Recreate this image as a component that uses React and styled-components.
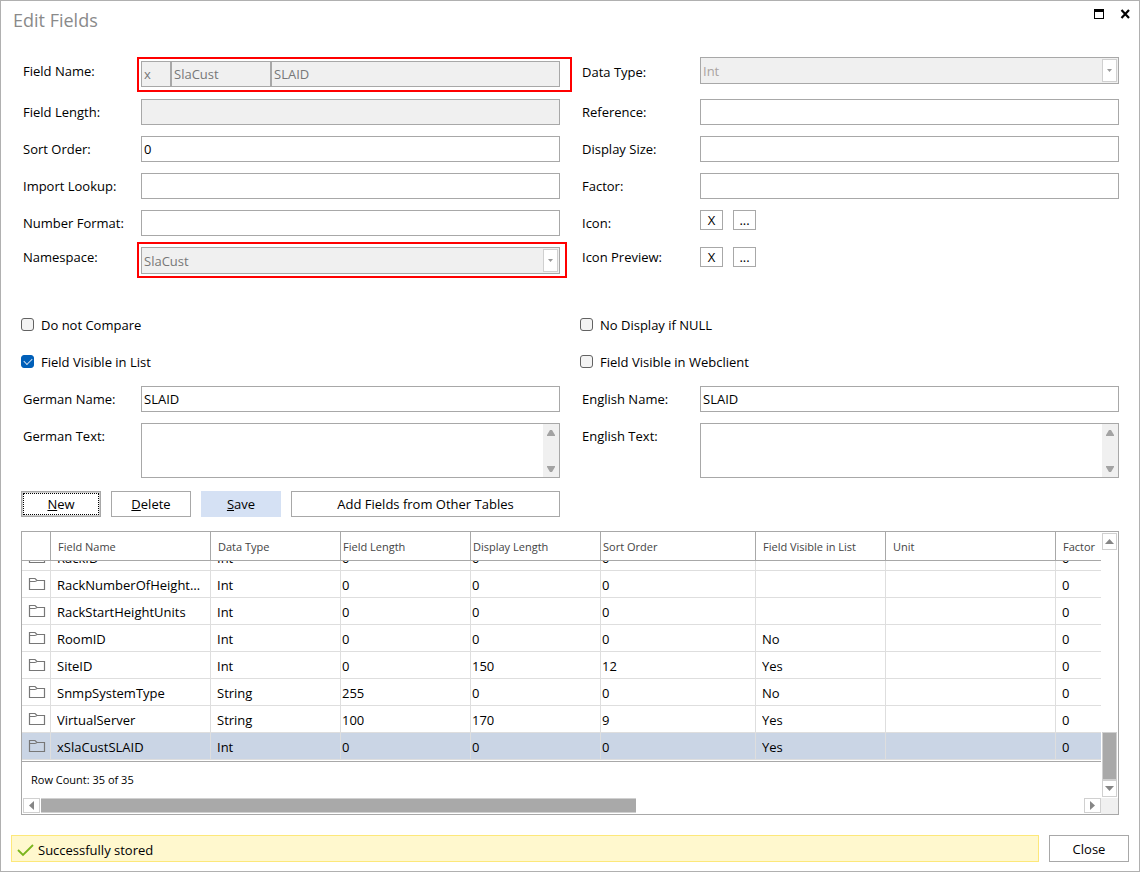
import React, { useState } from "react";
import styled, { createGlobalStyle, css } from "styled-components";

const line = "#a8a8a8";
const softLine = "#dedede";

const GlobalStyle = createGlobalStyle`
  * {
    box-sizing: border-box;
  }

  body {
    margin: 0;
    background: #fff;
  }

  body, button, input, select, textarea {
    font-family: "Open Sans", "Noto Sans", sans-serif;
    font-size: 13px;
    color: #000;
  }
`;

const Dialog = styled.main`
  border: 1px solid #b0b0b0;
  background: #fff;
`;

const TitleBar = styled.header`
  display: flex;
  justify-content: space-between;
  align-items: flex-start;
  height: 56px;
  padding: 6px 6px 0 12px;
`;

const Title = styled.h1`
  margin: 0;
  font-size: 18px;
  line-height: 26px;
  font-weight: 400;
  color: #8a8a8a;
`;

const WindowButtons = styled.div`
  display: flex;
  gap: 10px;
`;

const WindowButton = styled.button`
  display: flex;
  padding: 2px;
  border: none;
  background: none;
`;

const Content = styled.div`
  padding: 0 20px;
`;

const FieldGrid = styled.div`
  display: grid;
  grid-template-columns: minmax(0, 1fr) minmax(0, 1fr);
  gap: 11px 20px;
  margin-bottom: ${(props) => props.$space}px;
`;

const Field = styled.div`
  display: grid;
  grid-template-columns: 120px minmax(0, 1fr);
  align-items: start;
`;

const Label = styled.label`
  padding-left: 2px;
  line-height: ${(props) => props.$line || 26}px;
`;

const boxStyle = css`
  border: 1px solid ${line};
  border-radius: 0;
  background: ${(props) => (props.disabled || props.$disabled ? "#f0f0f0" : "#fff")};
`;

const TextInput = styled.input`
  ${boxStyle}
  flex: ${(props) => (props.$width ? "none" : 1)};
  width: ${(props) => (props.$width ? `${props.$width}px` : "100%")};
  min-width: 0;
  height: 26px;
  padding: 0 2px;

  &:disabled {
    color: #777;
  }
`;

const NameParts = styled.div`
  position: relative;
  display: flex;
  margin: 4px 0 1px;
`;

const Marker = styled.span`
  position: absolute;
  inset: ${(props) => props.$inset};
  border: 2px solid #f00;
  pointer-events: none;
`;

const SelectBox = styled.div`
  ${boxStyle}
  position: relative;
  display: flex;
  height: 27px;
  padding: 1px;
`;

const SelectInput = styled.select`
  flex: 1;
  min-width: 0;
  padding: 0 1px;
  border: none;
  appearance: none;
  background: transparent;
  opacity: 1;

  &:disabled {
    color: ${(props) => (props.$pale ? "#aaa3a0" : "#777")};
  }
`;

const SelectArrow = styled.span`
  display: flex;
  align-items: center;
  justify-content: center;
  width: 15px;
  border: 1px solid #d0d0d0;
  background: #fff;
`;

const AreaBox = styled.div`
  ${boxStyle}
  display: flex;
  height: 55px;
`;

const TextArea = styled.textarea`
  flex: 1;
  min-width: 0;
  padding: 2px;
  border: none;
  resize: none;
  overflow: hidden;
`;

const AreaScroll = styled.span`
  display: flex;
  flex-direction: column;
  justify-content: space-between;
  align-items: center;
  width: 16px;
  padding: 6px 0 5px;
  background: #f0f0f0;
`;

const IconButtons = styled.div`
  display: flex;
  gap: 10px;
`;

const IconButton = styled.button`
  ${boxStyle}
  width: 23px;
  height: 20px;
  padding: 0;
  line-height: 18px;
`;

const CheckLabel = styled.label`
  display: flex;
  align-items: center;
  gap: 7px;
  height: 26px;
`;

const CheckInput = styled.input`
  display: grid;
  place-items: center;
  width: 13px;
  height: 13px;
  margin: 0 0 1px;
  appearance: none;
  border: 1px solid #626262;
  border-radius: 3px;
  background: #f3f3f3;

  &:checked {
    border-color: #005fb8;
    background: #005fb8;
  }

  &:checked::after {
    content: "";
    width: 7px;
    height: 4px;
    margin-bottom: 2px;
    border: solid #cfe0f2;
    border-width: 0 0 1px 1px;
    transform: rotate(-45deg);
  }
`;

const ButtonRow = styled.div`
  display: flex;
  gap: 10px;
  margin-bottom: 14px;
`;

const Button = styled.button`
  ${boxStyle}
  width: ${(props) => (props.$wide ? 269 : 80)}px;
  height: ${(props) => (props.$tall ? 27 : 26)}px;
  padding: 0;

  ${(props) =>
    props.$primary &&
    css`
      border-color: #d5e1f4;
      background: #d5e1f4;
    `}

  ${(props) =>
    props.$focused &&
    css`
      box-shadow: inset 0 0 0 1px #d0d0d0;
      outline: 1px dotted #000;
      outline-offset: -3px;
    `}
`;

const GridPanel = styled.section`
  display: grid;
  grid-template-columns: minmax(0, 1fr) 17px;
  margin-bottom: 20px;
  border: 1px solid ${line};
`;

const Table = styled.table`
  width: 100%;
  table-layout: fixed;
  border-collapse: separate;
  border-spacing: 0;
`;

const HeadCell = styled.th`
  height: 29px;
  padding: 0 0 0 ${(props) => (props.$tight ? 2 : 7)}px;
  border-right: 1px solid ${line};
  border-bottom: 1px solid ${line};
  font-size: 11px;
  font-weight: 400;
  text-align: left;
  white-space: nowrap;
  color: #444;

  &:last-child {
    border-right: none;
  }
`;

const Row = styled.tr`
  background: ${(props) => (props.$selected ? "#cad5e5" : "#fff")};
`;

const Cell = styled.td`
  padding: 0 0 0 ${(props) => (props.$tight ? 1 : 6)}px;
  border-right: 1px solid ${softLine};
  border-bottom: 1px solid ${softLine};

  &:last-child {
    border-right: none;
  }
`;

// the top row is scrolled halfway under the header, only its lower edge shows
const CellClip = styled.div`
  display: flex;
  align-items: flex-end;
  height: ${(props) => (props.$cut ? 9 : 26)}px;
  overflow: hidden;
`;

const CellText = styled.div`
  flex: none;
  max-width: 100%;
  padding: 2px 9px 0 0;
  line-height: 24px;
  overflow: hidden;
  text-overflow: ellipsis;
  white-space: nowrap;
`;

const FolderBox = styled.span`
  display: flex;
  flex: none;
  align-items: center;
  height: 26px;
`;

const RowCount = styled.div`
  margin-top: 1px;
  padding-left: 9px;
  border-top: 1px solid ${line};
  font-size: 11px;
  line-height: 36px;
`;

const ScrollButton = styled.button`
  display: flex;
  align-items: center;
  justify-content: center;
  width: ${(props) => (props.$side ? 17 : 15)}px;
  height: ${(props) => (props.$side ? 15 : 17)}px;
  padding: 0;
  border: 1px solid #d0d0d0;
  background: #fff;
`;

const HScroll = styled.div`
  display: flex;
  height: 15px;
  margin: 0 0 1px 1px;
`;

const HTrack = styled.div`
  flex: 1;
  padding-left: 1px;
`;

const HThumb = styled.div`
  width: 57%;
  height: 100%;
  border: solid #d0d0d0;
  border-width: 1px 0;
  background: #a9a9a9;
`;

const VScroll = styled.div`
  display: flex;
  flex-direction: column;
`;

const VTrack = styled.div`
  display: flex;
  flex: 1;
  flex-direction: column;
  padding: 1px;
`;

const VThumb = styled.div`
  height: 48px;
  margin-top: auto;
  border: 1px solid #d0d0d0;
  background: #a9a9a9;
`;

const Corner = styled.div`
  height: 16px;
  background: #f0f0f0;
`;

const Footer = styled.footer`
  display: flex;
  gap: 10px;
  padding: 0 10px 9px;
`;

const Status = styled.div`
  display: flex;
  flex: 1;
  align-items: center;
  gap: 4px;
  padding: 2px 5px 0;
  border: 1px solid #fde87a;
  background: #fff8ce;
`;

const shapes = {
  up: "M0 5 L5 0 L10 5 Z",
  down: "M0 0 L10 0 L5 5 Z",
  left: "M5 0 L5 10 L0 5 Z",
  right: "M0 0 L5 5 L0 10 Z",
};

const Triangle = ({ dir, size = 9, color = "#868686" }) => {
  const side = dir === "left" || dir === "right";
  const small = Math.ceil(size / 2);
  return (
    <svg
      width={side ? small : size}
      height={side ? size : small}
      viewBox={side ? "0 0 5 10" : "0 0 10 5"}
      preserveAspectRatio="none"
      aria-hidden="true"
    >
      <path d={shapes[dir]} fill={color} />
    </svg>
  );
};

const AreaArrow = ({ up }) => (
  <svg width="8" height="6" viewBox="0 0 8 6" aria-hidden="true">
    <path d={up ? "M0 6V5L3 0H5L8 5V6Z" : "M0 0V1L3 6H5L8 1V0Z"} fill="#a3a3a3" />
  </svg>
);

const FolderIcon = () => (
  <svg width="18" height="14" viewBox="0 0 18 14" fill="none" stroke="#777" aria-hidden="true">
    <path d="M1.5 12.5V1.5H7L9 3.5H16.5V12.5Z" strokeWidth="1.2" />
    <path d="M1.5 4.5H7L9.5 3.5" />
  </svg>
);

const columns = [
  { key: "icon", title: "", width: 29 },
  { key: "name", title: "Field Name", width: 160 },
  { key: "type", title: "Data Type", width: 130 },
  { key: "length", title: "Field Length", width: 130, tight: true },
  { key: "display", title: "Display Length", width: 130, tight: true },
  { key: "sort", title: "Sort Order", width: 155, tight: true },
  { key: "visible", title: "Field Visible in List", width: 130 },
  { key: "unit", title: "Unit", width: 170 },
  { key: "factor", title: "Factor" },
];

const rows = [
  { name: "RackID", type: "Int", length: 0, display: 0, sort: 0, factor: 0 },
  { name: "RackNumberOfHeightUnits", type: "Int", length: 0, display: 0, sort: 0, factor: 0 },
  { name: "RackStartHeightUnits", type: "Int", length: 0, display: 0, sort: 0, factor: 0 },
  { name: "RoomID", type: "Int", length: 0, display: 0, sort: 0, visible: "No", factor: 0 },
  { name: "SiteID", type: "Int", length: 0, display: 150, sort: 12, visible: "Yes", factor: 0 },
  { name: "SnmpSystemType", type: "String", length: 255, display: 0, sort: 0, visible: "No", factor: 0 },
  { name: "VirtualServer", type: "String", length: 100, display: 170, sort: 9, visible: "Yes", factor: 0 },
  { name: "xSlaCustSLAID", type: "Int", length: 0, display: 0, sort: 0, visible: "Yes", factor: 0 },
];

const TextField = ({ id, label, value = "", disabled }) => (
  <Field>
    <Label htmlFor={id}>{label}</Label>
    <TextInput id={id} defaultValue={value} disabled={disabled} />
  </Field>
);

const SelectField = ({ id, label, value, line: lineHeight, pale, children }) => (
  <Field>
    <Label htmlFor={id} $line={lineHeight}>{label}</Label>
    <SelectBox $disabled>
      <SelectInput id={id} $pale={pale} disabled>
        <option>{value}</option>
      </SelectInput>
      <SelectArrow>
        <Triangle dir="down" size={5} color="#999" />
      </SelectArrow>
      {children}
    </SelectBox>
  </Field>
);

const AreaField = ({ id, label }) => (
  <Field>
    <Label htmlFor={id}>{label}</Label>
    <AreaBox>
      <TextArea id={id} />
      <AreaScroll>
        <AreaArrow up />
        <AreaArrow />
      </AreaScroll>
    </AreaBox>
  </Field>
);

const IconField = ({ label, line: lineHeight }) => (
  <Field role="group" aria-label={label}>
    <Label as="span" $line={lineHeight}>{label}</Label>
    <IconButtons>
      <IconButton type="button">X</IconButton>
      <IconButton type="button">...</IconButton>
    </IconButtons>
  </Field>
);

const CheckField = ({ label, checked = false }) => {
  const [on, setOn] = useState(checked);
  return (
    <CheckLabel>
      <CheckInput type="checkbox" checked={on} onChange={() => setOn(!on)} />
      {label}
    </CheckLabel>
  );
};

const App = () => {
  const [selected, setSelected] = useState("xSlaCustSLAID");

  return (
    <Dialog>
      <GlobalStyle />
      <TitleBar>
        <Title>Edit Fields</Title>
        <WindowButtons>
          <WindowButton type="button" aria-label="Maximize">
            <svg width="12" height="10" viewBox="0 0 12 10">
              <path d="M1 0H11V10H1ZM2 3V9H10V3Z" fill="#000" fillRule="evenodd" />
            </svg>
          </WindowButton>
          <WindowButton type="button" aria-label="Close window">
            <svg width="12" height="10" viewBox="0 0 12 10">
              <path d="M2.5 1L10 9M10 1L2.5 9" stroke="#000" strokeWidth="2.2" />
            </svg>
          </WindowButton>
        </WindowButtons>
      </TitleBar>

      <Content>
        <FieldGrid $space={38}>
          <Field>
            <Label htmlFor="fieldName" $line={28}>Field Name:</Label>
            <NameParts>
              <TextInput $width={30} defaultValue="x" aria-label="Prefix" disabled />
              <TextInput $width={100} defaultValue="SlaCust" aria-label="Name prefix" disabled />
              <TextInput id="fieldName" defaultValue="SLAID" disabled />
              <Marker $inset="-4px -12px -5px -4px" />
            </NameParts>
          </Field>
          <SelectField id="dataType" label="Data Type:" value="Int" line={30} pale />
          <TextField id="fieldLength" label="Field Length:" disabled />
          <TextField id="reference" label="Reference:" />
          <TextField id="sortOrder" label="Sort Order:" value="0" />
          <TextField id="displaySize" label="Display Size:" />
          <TextField id="importLookup" label="Import Lookup:" />
          <TextField id="factor" label="Factor:" />
          <TextField id="numberFormat" label="Number Format:" />
          <IconField label="Icon:" />
          <SelectField id="namespace" label="Namespace:" value="SlaCust" line={20}>
            <Marker $inset="-6px -8px -5px -5px" />
          </SelectField>
          <IconField label="Icon Preview:" line={20} />
        </FieldGrid>

        <FieldGrid $space={13}>
          <CheckField label="Do not Compare" />
          <CheckField label="No Display if NULL" />
          <CheckField label="Field Visible in List" checked />
          <CheckField label="Field Visible in Webclient" />
          <TextField id="germanName" label="German Name:" value="SLAID" />
          <TextField id="englishName" label="English Name:" value="SLAID" />
          <AreaField id="germanText" label="German Text:" />
          <AreaField id="englishText" label="English Text:" />
        </FieldGrid>

        <ButtonRow>
          <Button type="button" $focused><u>N</u>ew</Button>
          <Button type="button"><u>D</u>elete</Button>
          <Button type="button" $primary><u>S</u>ave</Button>
          <Button type="button" $wide>Add Fields from Other Tables</Button>
        </ButtonRow>

        <GridPanel>
          <div>
            <Table>
              <colgroup>
                {columns.map((col) => (
                  <col key={col.key} width={col.width} />
                ))}
              </colgroup>
              <thead>
                <tr>
                  {columns.map((col) => (
                    <HeadCell key={col.key} $tight={col.tight}>{col.title}</HeadCell>
                  ))}
                </tr>
              </thead>
              <tbody>
                {rows.map((row, index) => (
                  <Row
                    key={row.name}
                    $selected={row.name === selected}
                    onClick={() => setSelected(row.name)}
                  >
                    {columns.map((col) => (
                      <Cell key={col.key} $tight={col.tight}>
                        <CellClip $cut={index === 0}>
                          {col.key === "icon" ? (
                            <FolderBox>
                              <FolderIcon />
                            </FolderBox>
                          ) : (
                            <CellText>{row[col.key]}</CellText>
                          )}
                        </CellClip>
                      </Cell>
                    ))}
                  </Row>
                ))}
              </tbody>
            </Table>
            <RowCount>Row Count: 35 of 35</RowCount>
            <HScroll>
              <ScrollButton type="button" $side aria-label="Scroll left">
                <Triangle dir="left" />
              </ScrollButton>
              <HTrack>
                <HThumb />
              </HTrack>
              <ScrollButton type="button" $side aria-label="Scroll right">
                <Triangle dir="right" />
              </ScrollButton>
            </HScroll>
          </div>
          <VScroll>
            <VTrack>
              <ScrollButton type="button" aria-label="Scroll up">
                <Triangle dir="up" />
              </ScrollButton>
              <VThumb />
              <ScrollButton type="button" aria-label="Scroll down">
                <Triangle dir="down" />
              </ScrollButton>
            </VTrack>
            <Corner />
          </VScroll>
        </GridPanel>
      </Content>

      <Footer>
        <Status role="status">
          <svg width="17" height="14" viewBox="0 0 17 14" fill="none" aria-hidden="true">
            <path d="M1 7L6 12L16 2" stroke="#7ab51d" strokeWidth="1.8" />
          </svg>
          Successfully stored
        </Status>
        <Button type="button" $tall>Close</Button>
      </Footer>
    </Dialog>
  );
};

export default App;
